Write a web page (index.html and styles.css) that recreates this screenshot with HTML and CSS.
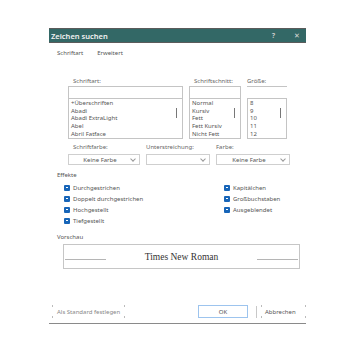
FILE: index.html
```html
<!DOCTYPE html>
<html lang="de">
<head>
    <meta charset="UTF-8">
    <title>Zeichen suchen</title>
    <link rel="stylesheet" href="styles.css">
</head>
<body>
    <div class="dialog">
        <div class="titlebar">
            <span class="title">Zeichen suchen</span>
            <span class="help">?</span>
            <span class="close">&#x2715;</span>
        </div>

        <div class="tabs">
            <span class="tab">Schriftart</span>
            <span class="tab">Erweitert</span>
        </div>

        <div class="font-row">
            <div class="col col-font">
                <div class="label indent">Schriftart:</div>
                <div class="input"></div>
                <div class="list">
                    <div>+Überschriften</div>
                    <div>Abadi</div>
                    <div>Abadi ExtraLight</div>
                    <div>Abel</div>
                    <div>Abril Fatface</div>
                    <span class="thumb"></span>
                </div>
            </div>
            <div class="col col-style">
                <div class="label indent">Schriftschnitt:</div>
                <div class="input"></div>
                <div class="list">
                    <div>Normal</div>
                    <div>Kursiv</div>
                    <div>Fett</div>
                    <div>Fett Kursiv</div>
                    <div>Nicht Fett</div>
                    <span class="thumb"></span>
                </div>
            </div>
            <div class="col col-size">
                <div class="label">Größe:</div>
                <div class="input input-top"></div>
                <div class="list">
                    <div>8</div>
                    <div>9</div>
                    <div>10</div>
                    <div>11</div>
                    <div>12</div>
                    <span class="thumb"></span>
                </div>
            </div>
        </div>

        <div class="select-row">
            <div class="col col-color">
                <div class="label indent">Schriftfarbe:</div>
                <div class="select"><span>Keine Farbe</span><i class="chev"></i></div>
            </div>
            <div class="col col-under">
                <div class="label">Unterstreichung:</div>
                <div class="select"><span></span><i class="chev"></i></div>
            </div>
            <div class="col col-ucolor">
                <div class="label">Farbe:</div>
                <div class="select"><span>Keine Farbe</span><i class="chev"></i></div>
            </div>
        </div>

        <div class="section">Effekte</div>
        <div class="effects">
            <div class="check"><span class="box"></span>Durchgestrichen</div>
            <div class="check"><span class="box"></span>Kapitälchen</div>
            <div class="check"><span class="box"></span>Doppelt durchgestrichen</div>
            <div class="check"><span class="box"></span>Großbuchstaben</div>
            <div class="check"><span class="box"></span>Hochgestellt</div>
            <div class="check"><span class="box"></span>Ausgeblendet</div>
            <div class="check"><span class="box"></span>Tiefgestellt</div>
        </div>

        <div class="section section-preview">Vorschau</div>
        <div class="preview">
            <span class="rule"></span>
            <span class="sample">Times New Roman</span>
            <span class="rule"></span>
        </div>

        <div class="footer">
            <span class="btn btn-flat">Als Standard festlegen</span>
            <span class="btn btn-ok">OK</span>
            <span class="sep"></span>
            <span class="btn btn-flat btn-cancel">Abbrechen</span>
        </div>
    </div>
</body>
</html>
```

FILE: styles.css
```css
body {
    margin: 0;
    background: #ffffff;
    font-family: "Noto Sans", "Open Sans", sans-serif;
    font-size: 6px;
    color: #555;
}
.dialog {
    margin: 28px 0 0 49px;
    width: 257px;
    height: 295px;
    display: flex;
    flex-direction: column;
    border-bottom: 1px solid #8a8a8a;
}
.titlebar {
    height: 13px;
    background-color: #336866;
    border-top: 1px solid #5b5b5b;
    border-bottom: 1px solid #5b5b5b;
    display: flex;
    align-items: center;
    color: #f2f2f2;
    padding-left: 2px;
}
.title {
    font-size: 7.5px;
    font-weight: 600;
    flex: 1;
}
.help {
    font-size: 7px;
    font-weight: bold;
    color: #c8c8c8;
    margin-right: 19px;
}
.close {
    font-size: 7px;
    color: #d8d8d8;
    margin-right: 6px;
}
.tabs {
    display: flex;
    gap: 14px;
    padding: 6px 0 0 8px;
    line-height: 8px;
    color: #555;
}
.font-row, .select-row {
    display: flex;
    gap: 6px;
    padding-left: 19px;
}
.font-row {
    margin-top: 20px;
}
.label {
    line-height: 8px;
    height: 8px;
    color: #666;
}
.indent {
    padding-left: 5px;
}
.col-font { width: 115px; }
.col-style { width: 52px; }
.col-size { width: 40px; }
.input {
    margin-top: 1px;
    height: 11px;
    border: 1px solid #c4c4c4;
    border-bottom: none;
}
.input-top {
    border-left: none;
    border-right: none;
}
.list {
    position: relative;
    height: 38px;
    border: 1px solid #c4c4c4;
    padding: 1px 0 0 2px;
    line-height: 7.7px;
    color: #555;
    overflow: hidden;
}
.thumb {
    position: absolute;
    right: 5px;
    top: 9px;
    width: 1.5px;
    height: 10px;
    background: #777;
}
.select-row {
    margin-top: 4px;
}
.col-color { width: 72px; }
.col-under { width: 64px; }
.col-ucolor { width: 74px; }
.select {
    margin-top: 3px;
    height: 9px;
    border: 1px solid #cfcfcf;
    display: flex;
    align-items: center;
    color: #555;
}
.select span {
    flex: 1;
    text-align: center;
}
.chev {
    width: 3px;
    height: 3px;
    border-right: 1px solid #999;
    border-bottom: 1px solid #999;
    transform: rotate(45deg);
    margin: 0 4px 2px 0;
}
.section {
    margin-top: 6px;
    padding-left: 8px;
    line-height: 8px;
    color: #555;
}
.effects {
    margin-top: 3px;
    display: grid;
    grid-template-columns: 160px 80px;
    grid-auto-rows: 11px;
    padding-left: 15px;
}
.check {
    display: flex;
    align-items: center;
    gap: 3px;
    color: #555;
}
.box {
    position: relative;
    width: 6px;
    height: 6px;
    background: #1765b8;
    border-radius: 1px;
}
.box::after {
    content: "";
    position: absolute;
    left: 2px;
    top: 2.5px;
    width: 2px;
    height: 1px;
    background: #ffffff;
}
.section-preview {
    margin-top: 7px;
}
.preview {
    margin: 3px 0 0 14px;
    width: 235px;
    height: 23px;
    border: 1px solid #c6c6c6;
    display: flex;
    align-items: center;
}
.rule {
    width: 41px;
    height: 1px;
    background: #b5b5b5;
    margin: 6px 1px 0 1px;
}
.sample {
    flex: 1;
    text-align: center;
    font-family: "Liberation Serif", serif;
    font-size: 9.5px;
    color: #333;
}
.footer {
    margin-top: auto;
    margin-bottom: 5px;
    display: flex;
    align-items: center;
    padding-left: 3px;
}
.btn {
    height: 13px;
    display: flex;
    align-items: center;
    box-sizing: border-box;
    white-space: nowrap;
    color: #555;
}
.btn-flat {
    padding: 0 5px;
    background:
        linear-gradient(#bbb, #bbb) left top / 1px 2px no-repeat,
        linear-gradient(#bbb, #bbb) right top / 1px 2px no-repeat,
        linear-gradient(#bbb, #bbb) left bottom / 1px 2px no-repeat,
        linear-gradient(#bbb, #bbb) right bottom / 1px 2px no-repeat;
    color: #888;
}
.btn-ok {
    margin-left: auto;
    width: 50px;
    justify-content: center;
    border: 1px solid #9dc4ee;
}
.sep {
    width: 1px;
    height: 12px;
    background: #c8c8c8;
    margin: 0 4px 0 8px;
}
.btn-cancel {
    width: 45px;
    padding: 0 0 0 4px;
    color: #555;
}
```
